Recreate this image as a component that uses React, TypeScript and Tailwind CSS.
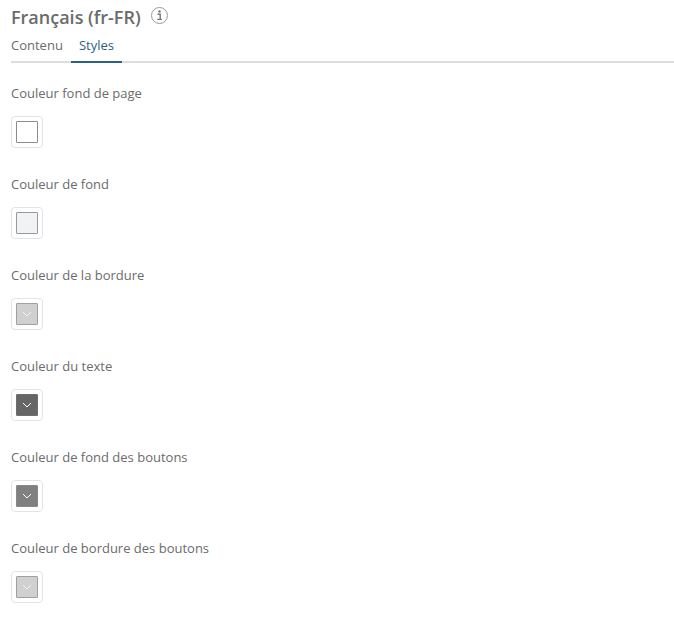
const fields = [
  { label: 'Couleur fond de page', color: 'bg-white border-[#8c8c8c]', chevron: '' },
  { label: 'Couleur de fond', color: 'bg-[#f1f2f4] border-[#999999]', chevron: 'text-[#f8f8f8]' },
  { label: 'Couleur de la bordure', color: 'bg-[#d0d0d0] border-[#a0a0a0]', chevron: 'text-[#f4f4f4]' },
  { label: 'Couleur du texte', color: 'bg-[#666666] border-[#6e6e6e]', chevron: 'text-white' },
  { label: 'Couleur de fond des boutons', color: 'bg-[#808080] border-[#888888]', chevron: 'text-white' },
  { label: 'Couleur de bordure des boutons', color: 'bg-[#d0d0d0] border-[#a0a0a0]', chevron: 'text-[#f4f4f4]' },
];

function Swatch({ color, chevron }: { color: string; chevron: string }) {
  return (
    <div className="mt-2 flex h-8 w-8 items-center justify-center rounded-[4px] border border-[#e2e2ea] bg-white">
      <div className={`flex h-[22px] w-[22px] items-center justify-center rounded-[1px] border ${color}`}>
        {chevron && (
          <svg className={chevron} width="10" height="6" viewBox="0 0 10 6" fill="none" stroke="currentColor" strokeWidth="1">
            <path d="M1 1l4 4 4-4" />
          </svg>
        )}
      </div>
    </div>
  );
}

export default function App() {
  return (
    <div className="min-h-screen bg-white pl-[11px] font-['Open_Sans',sans-serif] text-[#6b6b6b]">
      <div className="flex h-[34px] items-center">
        <h1 className="text-[18px] font-semibold leading-none">Français (fr-FR)</h1>
        <svg className="ml-[10px] mb-[2px]" width="18" height="18" viewBox="0 0 18 18" fill="none">
          <circle cx="8.5" cy="8.5" r="8" stroke="#9a9a9a" strokeWidth="1" />
          <circle cx="8.5" cy="4.5" r="1.2" fill="#777777" />
          <path d="M6.5 7.3h2.7v4.6M6.3 12.4h4.6" stroke="#777777" strokeWidth="1.4" />
        </svg>
      </div>
      <div className="flex h-[29px] border-b-2 border-[#dddddd] text-[13px]">
        <div className="flex h-[29px] items-center pb-[6px] pr-2">Contenu</div>
        <div className="flex h-[29px] items-center border-b-2 border-[#2c5f8a] px-2 pb-[4px] text-[#2c5f8a]">Styles</div>
      </div>
      <div className="flex flex-col gap-[26px] pt-[20px]">
        {fields.map(f => (
          <div key={f.label}>
            <div className="h-[25px] text-[13px] leading-[20px]">{f.label}</div>
            <Swatch color={f.color} chevron={f.chevron} />
          </div>
        ))}
      </div>
    </div>
  );
}
